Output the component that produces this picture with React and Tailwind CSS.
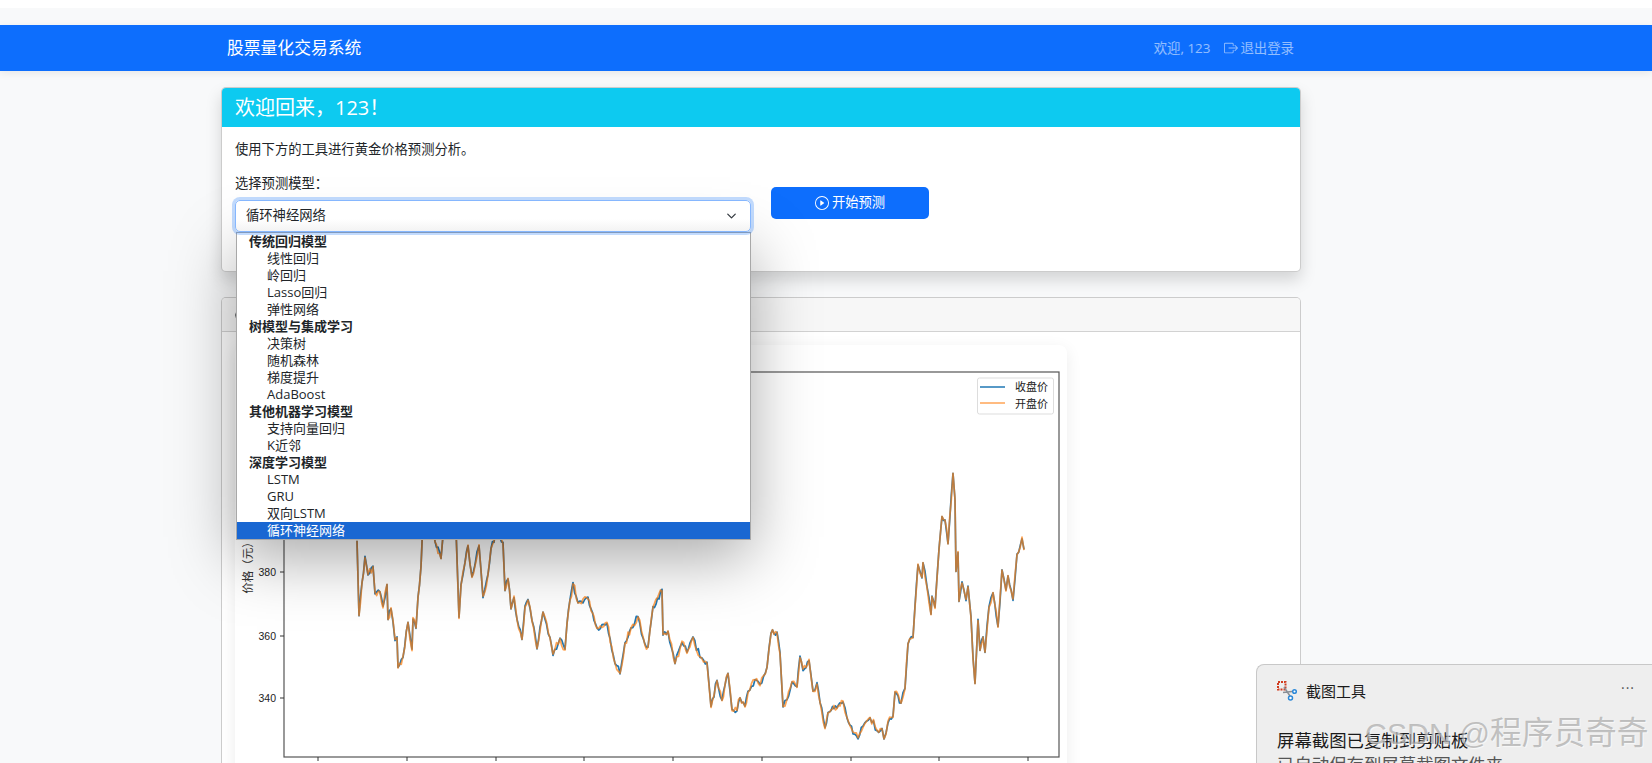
import React from "react";

const FONT = "font-['Open_Sans','Noto_Sans_CJK_SC',sans-serif]";

const GROUPS = [
  { label: "传统回归模型", items: ["线性回归", "岭回归", "Lasso回归", "弹性网络"] },
  { label: "树模型与集成学习", items: ["决策树", "随机森林", "梯度提升", "AdaBoost"] },
  { label: "其他机器学习模型", items: ["支持向量回归", "K近邻"] },
  { label: "深度学习模型", items: ["LSTM", "GRU", "双向LSTM", "循环神经网络"] },
];

// price curve traced from the plot, in page pixels
const TRACE = [
  [357, 540], [359, 615], [362, 583], [365, 557], [368, 575], [373, 567], [375, 593], [380, 592], [383, 607], [387, 585],
  [388, 620], [391, 608], [395, 640], [397, 637], [398, 668], [403, 657], [408, 623], [412, 650], [413, 618], [416, 628],
  [418, 597], [421, 567], [423, 520], [430, 500], [435, 542], [441, 558], [445, 510], [456, 530], [459, 618], [461, 585],
  [465, 562], [468, 545], [472, 577], [475, 565], [479, 545], [483, 597], [488, 575], [491, 548], [497, 530], [503, 543],
  [505, 590], [508, 578], [511, 608], [514, 597], [517, 620], [522, 640], [525, 607], [528, 600], [532, 620], [537, 648],
  [543, 613], [550, 637], [553, 655], [560, 638], [565, 650], [567, 623], [573, 583], [578, 603], [588, 598], [597, 628],
  [607, 623], [615, 663], [620, 673], [625, 643], [631, 628], [638, 617], [645, 645], [648, 648], [653, 607], [662, 590],
  [663, 635], [668, 632], [675, 663], [682, 642], [687, 653], [693, 637], [700, 657], [707, 663], [711, 707], [717, 680],
  [722, 700], [728, 673], [732, 710], [737, 710], [740, 697], [745, 707], [748, 692], [755, 680], [760, 685], [767, 667],
  [771, 633], [777, 632], [780, 653], [783, 707], [787, 700], [792, 682], [797, 687], [800, 657], [803, 670], [809, 660],
  [813, 692], [817, 683], [820, 703], [825, 728], [828, 712], [837, 708], [843, 702], [847, 718], [853, 733], [858, 738],
  [863, 727], [870, 717], [877, 730], [882, 728], [884, 739], [888, 722], [893, 717], [895, 692], [901, 703], [905, 688],
  [908, 643], [913, 638], [915, 607], [918, 565], [922, 578], [923, 562], [927, 587], [931, 615], [932, 597], [935, 608],
  [937, 578], [939, 550], [942, 517], [945, 520], [948, 543], [953, 473], [955, 500], [956, 572], [958, 552], [959, 602],
  [962, 582], [966, 600], [968, 587], [971, 617], [973, 658], [975, 683], [978, 620], [980, 650], [983, 637], [985, 652],
  [989, 607], [993, 592], [998, 627], [1002, 570], [1006, 590], [1008, 575], [1013, 600], [1017, 555], [1022, 538], [1024, 550],
];

// fill the traced points out to one sample every ~1.5px, with day-to-day noise
function buildLine(seed, amount) {
  let s = seed;
  const rand = () => {
    s = (s * 9301 + 49297) % 233280;
    return s / 233280 - 0.5;
  };
  const pts = [];
  TRACE.forEach(([x, y], i) => {
    pts.push(`${x},${(y + rand() * 2).toFixed(1)}`);
    const next = TRACE[i + 1];
    if (!next) return;
    const steps = Math.floor((next[0] - x) / 1.5);
    for (let k = 1; k < steps; k++) {
      const t = k / steps;
      const px = x + (next[0] - x) * t;
      const py = y + (next[1] - y) * t + rand() * amount;
      pts.push(`${px.toFixed(1)},${py.toFixed(1)}`);
    }
  });
  return pts.join(" ");
}

const closeLine = buildLine(17, 7);
const openLine = buildLine(91, 8);

function PriceChart() {
  const xTicks = [318, 407, 496, 584, 673, 762, 851, 939, 1028];
  const yTicks = [
    { y: 572, label: "380" },
    { y: 636, label: "360" },
    { y: 698, label: "340" },
  ];
  return (
    <svg viewBox="235 345 832 418" className="block w-[832px] h-[418px]">
      <rect x="284" y="372" width="775" height="385" fill="white" stroke="#555" strokeWidth="1.2" />
      {xTicks.map((x) => (
        <line key={x} x1={x} x2={x} y1="757" y2="761" stroke="#333" strokeWidth="1" />
      ))}
      {yTicks.map((t) => (
        <g key={t.y}>
          <line x1="280" x2="284" y1={t.y} y2={t.y} stroke="#333" strokeWidth="1" />
          <text x="276" y={t.y + 4} textAnchor="end" fontSize="10.5" fill="#222" fontFamily="Liberation Sans, sans-serif">
            {t.label}
          </text>
        </g>
      ))}
      <text
        transform="translate(252 565) rotate(-90)"
        textAnchor="middle"
        fontSize="11.5"
        fill="#333"
        fontFamily="Noto Sans CJK SC, sans-serif"
      >
        价格（元）
      </text>
      <polyline points={closeLine} fill="none" stroke="#1f77b4" strokeWidth="1.7" strokeLinejoin="round" />
      <polyline points={openLine} fill="none" stroke="#ff7f0e" strokeOpacity="0.7" strokeWidth="1.7" strokeLinejoin="round" />
      <rect x="977.5" y="378" width="76" height="36" rx="2" fill="white" stroke="#ddd" />
      <line x1="980" x2="1005" y1="387" y2="387" stroke="#1f77b4" strokeWidth="1.5" />
      <line x1="980" x2="1005" y1="403" y2="403" stroke="#ff7f0e" strokeOpacity="0.7" strokeWidth="1.5" />
      <text x="1015" y="391" fontSize="11" fill="#222" fontFamily="Noto Sans CJK SC, sans-serif">收盘价</text>
      <text x="1015" y="408" fontSize="11" fill="#222" fontFamily="Noto Sans CJK SC, sans-serif">开盘价</text>
    </svg>
  );
}

function ModelSelect() {
  return (
    <div className="relative h-8">
      <div className="relative z-30 h-8 rounded-[5px] border border-[#86b7fe] bg-gradient-to-b from-white from-60% to-[#f3f3f3] shadow-[0_0_0_3px_rgba(13,110,253,0.25)] flex items-center justify-between pl-[10px] pr-3 text-[13.3px] text-[#212529]">
        <span>循环神经网络</span>
        <svg viewBox="0 0 16 16" className="w-[13px] h-[10px]" fill="none" stroke="#343a40" strokeWidth="2" strokeLinecap="round" strokeLinejoin="round">
          <path d="m2 5 6 6 6-6" />
        </svg>
      </div>
      <div className="absolute left-[1px] top-8 w-[515px] z-20 bg-white border border-[#a8a8a8] shadow-[0_18px_60px_rgba(0,0,0,0.34)] text-[13px] text-[#212529]">
        {GROUPS.map((group) => (
          <div key={group.label}>
            <div className="h-[17px] leading-[17px] pl-3 font-bold">{group.label}</div>
            {group.items.map((item) => (
              <div
                key={item}
                className={
                  item === "循环神经网络"
                    ? "h-[17px] leading-[17px] pl-[30px] bg-[#1967d2] text-white"
                    : "h-[17px] leading-[17px] pl-[30px]"
                }
              >
                {item}
              </div>
            ))}
          </div>
        ))}
      </div>
    </div>
  );
}

function SnipToast() {
  return (
    <div className="absolute right-0 bottom-0 w-[396px] h-[99px] z-30 overflow-hidden bg-[#eeeeee] border-t border-l border-[#c8c8c8] rounded-tl-lg pl-5 pt-4 text-[#1a1a1a]">
      <div className="flex items-center h-5">
        <svg viewBox="0 0 20 20" className="w-5 h-5 shrink-0">
          <rect x="1" y="1" width="7.5" height="7.5" fill="none" stroke="#d13c1f" strokeWidth="2" strokeDasharray="2 1" />
          <path d="M7 6l6 9M6 11.5l9-1" fill="none" stroke="#8a8f96" strokeWidth="1.5" />
          <circle cx="13.5" cy="17" r="2" fill="white" stroke="#2b88d8" strokeWidth="1.5" />
          <circle cx="17.5" cy="10.5" r="1.8" fill="white" stroke="#2b88d8" strokeWidth="1.5" />
        </svg>
        <span className="ml-[9px] text-[15px]">截图工具</span>
        <span className="absolute right-[17px] top-[12px] text-[14px] tracking-[1px] text-[#555]">···</span>
      </div>
      <div className="mt-[27px] text-[17.4px] leading-[24px]">屏幕截图已复制到剪贴板</div>
      <div className="text-[17.4px] leading-[24px] text-[#555]">已自动保存到屏幕截图文件夹</div>
    </div>
  );
}

export default function App() {
  return (
    <div className={`relative h-[763px] overflow-hidden bg-white ${FONT}`}>
      <div className="h-2 bg-white" />
      <div className="h-[755px] bg-[#f8f9fa] pt-[17px]">
        <nav className="h-[46px] bg-[#0d6efd] shadow-[0_2px_8px_rgba(0,0,0,0.08)]">
          <div className="ml-[227px] w-[1067px] h-full flex items-center justify-between">
            <span className="text-white text-[16.8px]">股票量化交易系统</span>
            <div className="flex items-center text-[13.4px] text-white/55">
              <span>欢迎, 123</span>
              <svg viewBox="0 0 16 16" fill="currentColor" className="w-[14px] h-[14px] ml-[14px] mr-[2px]">
                <path fillRule="evenodd" d="M10 12.5a.5.5 0 0 1-.5.5h-8a.5.5 0 0 1-.5-.5v-9a.5.5 0 0 1 .5-.5h8a.5.5 0 0 1 .5.5v2a.5.5 0 0 0 1 0v-2A1.5 1.5 0 0 0 9.5 2h-8A1.5 1.5 0 0 0 0 3.5v9A1.5 1.5 0 0 0 1.5 14h8a1.5 1.5 0 0 0 1.5-1.5v-2a.5.5 0 0 0-1 0z" />
                <path fillRule="evenodd" d="M15.854 8.354a.5.5 0 0 0 0-.708l-3-3a.5.5 0 0 0-.708.708L14.293 7.5H5.5a.5.5 0 0 0 0 1h8.793l-2.147 2.146a.5.5 0 0 0 .708.708z" />
              </svg>
              <span>退出登录</span>
            </div>
          </div>
        </nav>

        <main className="ml-[221px] w-[1080px] pt-4">
          <section className="relative z-10 h-[185px] bg-white rounded-[5px] border border-black/20 shadow-[0_8px_16px_rgba(0,0,0,0.15)]">
            <div className="h-[39px] bg-[#0dcaf0] rounded-t-[4px] px-[13px] flex items-center text-white text-[20px]">
              欢迎回来，123！
            </div>
            <div className="px-[13px] pt-3 text-[13.3px] text-[#212529]">
              <p className="h-5 leading-5">使用下方的工具进行黄金价格预测分析。</p>
              <div className="flex items-start gap-5 mt-[14px]">
                <div className="w-[516px]">
                  <label className="block h-5 leading-5 mb-[7px]">选择预测模型：</label>
                  <ModelSelect />
                </div>
                <button className="mt-[14px] w-[158px] h-8 rounded-[5px] bg-[#0d6efd] text-white flex items-center justify-center">
                  <svg viewBox="0 0 16 16" fill="currentColor" className="w-[14px] h-[14px] mr-[3px]">
                    <path d="M8 15A7 7 0 1 1 8 1a7 7 0 0 1 0 14m0 1A8 8 0 1 0 8 0a8 8 0 0 0 0 16" />
                    <path d="M6.271 5.055a.5.5 0 0 1 .52.038l3.5 2.5a.5.5 0 0 1 0 .814l-3.5 2.5A.5.5 0 0 1 6 10.5v-5a.5.5 0 0 1 .271-.445" />
                  </svg>
                  开始预测
                </button>
              </div>
            </div>
          </section>

          <section className="mt-[25px] h-[600px] bg-white rounded-[5px] border border-black/20">
            <div className="h-[34px] bg-[#f7f7f7] border-b border-black/15 rounded-t-[4px] pl-[13px] flex items-center">
              <svg viewBox="0 0 16 16" fill="none" stroke="#212529" strokeWidth="1.3" className="w-[14px] h-[14px]">
                <circle cx="8" cy="8" r="7" />
              </svg>
            </div>
            <div className="pl-[13px] pt-[13px]">
              <div className="w-[832px] h-[500px] bg-white rounded-lg shadow-[0_4px_16px_rgba(0,0,0,0.08)]">
                <PriceChart />
              </div>
            </div>
          </section>
        </main>
      </div>

      <SnipToast />

      <div className="absolute z-40 left-[1365px] top-[713px] leading-10 whitespace-nowrap text-[#8c8c8c]/50 [text-shadow:1px_1px_1px_rgba(255,255,255,0.6)] font-['Liberation_Sans','Noto_Sans_CJK_SC',sans-serif]">
        <span className="text-[30.3px]">CSDN @</span>
        <span className="text-[31.7px]">程序员奇奇</span>
      </div>
    </div>
  );
}
